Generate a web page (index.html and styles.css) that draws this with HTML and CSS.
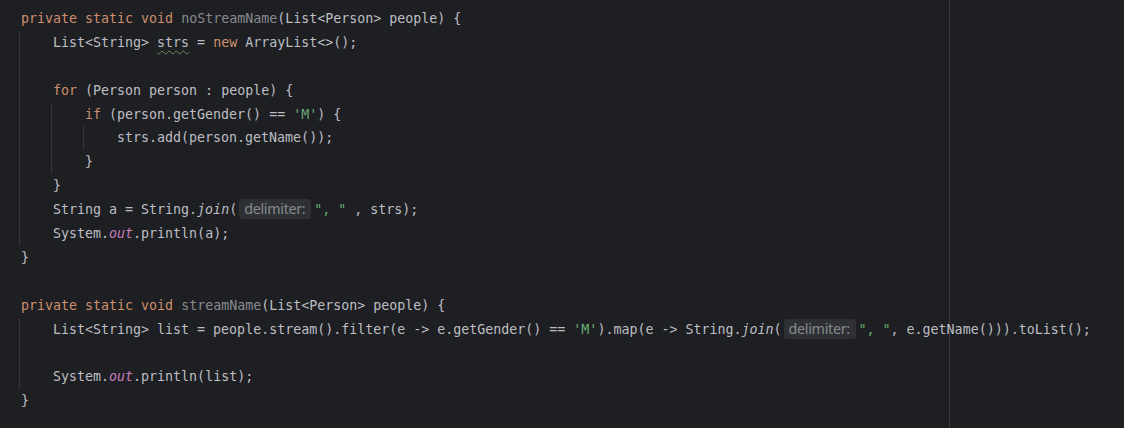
FILE: index.html
```html
<!DOCTYPE html>
<html>
<head>
<meta charset="utf-8">
<link rel="stylesheet" href="styles.css">
</head>
<body>
<div class="editor">
  <div class="ln"><span class="kw">private static void</span> <span class="unused">noStreamName</span>(List&lt;Person&gt; people) {</div>
  <div class="blk">
    <div class="ln">List&lt;String&gt; <span class="warn">strs</span> = <span class="kw">new</span> ArrayList&lt;&gt;();</div>
    <div class="ln"></div>
    <div class="ln"><span class="kw">for</span> (Person person : people) {</div>
    <div class="blk">
      <div class="ln"><span class="kw">if</span> (person.getGender() == <span class="str">'M'</span>) {</div>
      <div class="blk">
        <div class="ln">strs.add(person.getName());</div>
      </div>
      <div class="ln">}</div>
    </div>
    <div class="ln">}</div>
    <div class="ln">String a = String.<span class="smeth">join</span>(<span class="hint">delimiter:</span><span class="str">", "</span> , strs);</div>
    <div class="ln">System.<span class="sfield">out</span>.println(a);</div>
  </div>
  <div class="ln">}</div>
  <div class="ln"></div>
  <div class="ln"><span class="kw">private static void</span> <span class="unused">streamName</span>(List&lt;Person&gt; people) {</div>
  <div class="blk">
    <div class="ln">List&lt;String&gt; list = people.stream().filter(e -&gt; e.getGender() == <span class="str">'M'</span>).map(e -&gt; String.<span class="smeth">join</span>(<span class="hint">delimiter:</span><span class="str">", "</span>, e.getName())).toList();</div>
    <div class="ln"></div>
    <div class="ln">System.<span class="sfield">out</span>.println(list);</div>
  </div>
  <div class="ln">}</div>
</div>
</body>
</html>
```

FILE: styles.css
```css
html, body {
  margin: 0;
  padding: 0;
  background: #1e1f22;
}
.editor {
  width: 1124px;
  height: 428px;
  box-sizing: border-box;
  padding: 7px 0 0 21px;
  overflow: hidden;
  background: linear-gradient(to right, transparent 949px, #393b40 949px, #393b40 950px, transparent 950px), #1e1f22;
  color: #bcbec4;
  font-family: "DejaVu Sans Mono", "Liberation Mono", monospace;
  font-size: 13.3px;
}
.ln {
  height: 23.9px;
  line-height: 23.9px;
  white-space: pre;
}
.blk {
  margin-left: -2px;
  padding-left: 33px;
  border-left: 1px solid #313438;
}
.kw { color: #cf8e6d; }
.unused { color: #878a91; }
.str { color: #6aab73; }
.sfield { color: #c77dbb; font-style: italic; }
.smeth { font-style: italic; }
.warn {
  text-decoration: underline wavy #6f8c5b;
  text-decoration-thickness: 1px;
  text-underline-offset: 3px;
}
.hint {
  display: inline-block;
  height: 20px;
  line-height: 20px;
  width: 72px;
  box-sizing: border-box;
  margin: 0 3px 0 2px;
  padding-left: 5px;
  border-radius: 3px;
  background: #2f3034;
  color: #868a91;
  font-family: "Noto Sans", "Inter", sans-serif;
  font-size: 14.3px;
  letter-spacing: -0.3px;
  white-space: nowrap;
  overflow: hidden;
  vertical-align: middle;
  position: relative;
  top: -1px;
}
```
